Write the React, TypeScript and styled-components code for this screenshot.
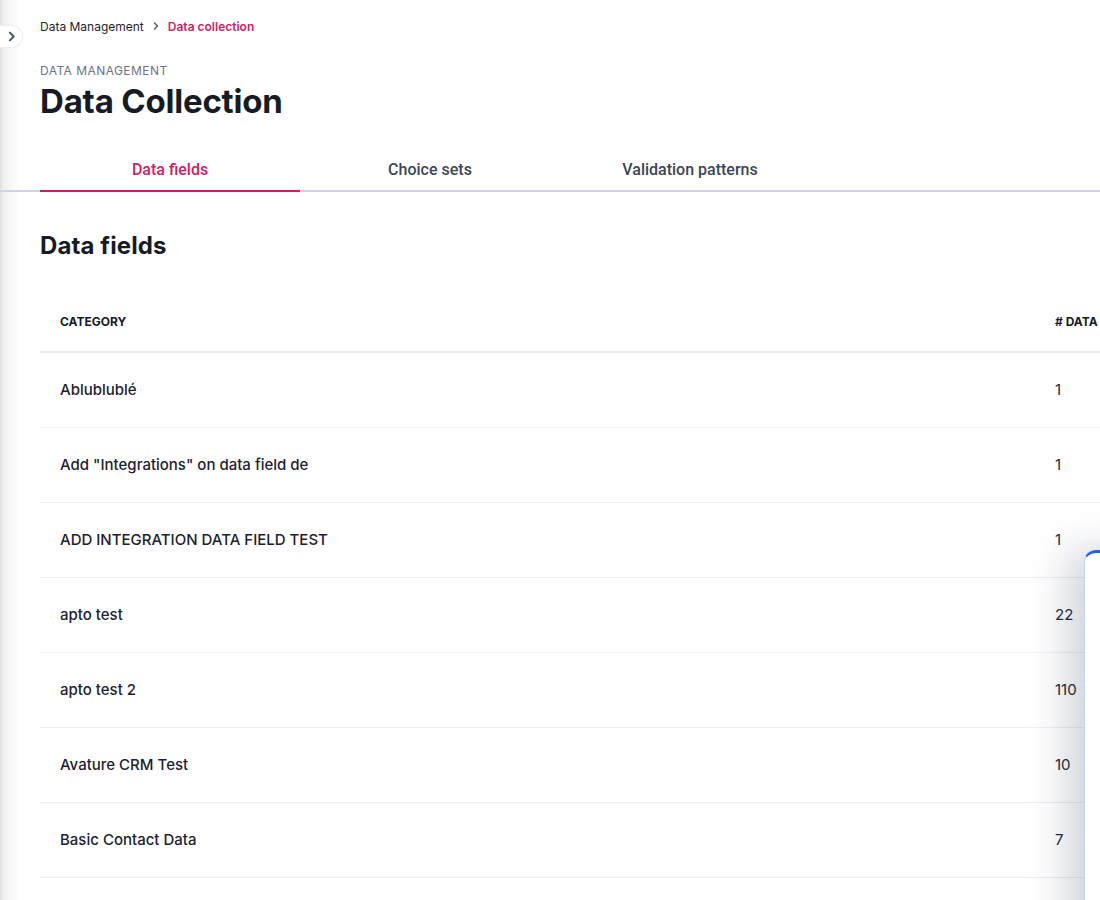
import React from "react";
import styled, { createGlobalStyle } from "styled-components";

const GlobalStyle = createGlobalStyle`
  html, body {
    margin: 0;
    padding: 0;
    background: #ffffff;
    font-family: Inter, "Noto Sans", sans-serif;
    color: #161b26;
  }
  * { box-sizing: border-box; }
`;

const Shell = styled.div`
  display: flex;
  height: 100vh;
  overflow: hidden;
  position: relative;
`;

// collapsed navigation: only the shaded edge is left
const SideRail = styled.aside`
  position: relative;
  flex: 0 0 20px;
  background: linear-gradient(
    to right,
    #dadada 0px,
    #ececec 2px,
    #f5f5f5 8px,
    #fbfbfb 14px,
    #ffffff 20px
  );
`;

const RailToggle = styled.button`
  position: absolute;
  top: 25px;
  left: 0;
  z-index: 3;
  width: 23px;
  height: 23px;
  padding: 0 0 0 1px;
  border: 1px solid #eceef3;
  border-left: none;
  border-radius: 0 12px 12px 0;
  background: #ffffff;
  display: flex;
  align-items: center;
  justify-content: center;
  color: #4b5565;
  cursor: pointer;
`;

const Main = styled.main`
  flex: 1;
  min-width: 0;
  padding: 17px 0 0 20px;
`;

const Crumbs = styled.nav`
  display: flex;
  align-items: center;
  gap: 8px;
  font-size: 12px;
  height: 18px;
`;

const Crumb = styled.span<{ $current?: boolean }>`
  color: ${(p) => (p.$current ? "#d81b60" : "#1f2430")};
  font-weight: ${(p) => (p.$current ? 600 : 400)};
`;

const Eyebrow = styled.div`
  margin-top: 28px;
  font-size: 12px;
  letter-spacing: 0.45px;
  text-transform: uppercase;
  color: #6b7385;
`;

const Title = styled.h1`
  margin: 3px 0 0;
  font-size: 33px;
  line-height: 40px;
  font-weight: 700;
  color: #161b26;
  letter-spacing: -0.2px;
`;

const TabBar = styled.div`
  position: relative;
  display: flex;
  margin-top: 31px;
  margin-left: -40px;
  padding-left: 40px;
  border-bottom: 2px solid #cdd3e0;
`;

const Tab = styled.button<{ $active?: boolean }>`
  width: 260px;
  height: 40px;
  margin-bottom: -2px;
  padding: 0 0 4px;
  background: none;
  border: none;
  border-bottom: 2px solid ${(p) => (p.$active ? "#d81b60" : "transparent")};
  font-family: Roboto, "Liberation Sans", sans-serif;
  font-weight: 500;
  font-size: 16px;
  color: ${(p) => (p.$active ? "#d81b60" : "#3d4555")};
  cursor: pointer;
`;

const SectionTitle = styled.h2`
  margin: 40px 0 0;
  font-size: 24px;
  line-height: 28px;
  font-weight: 700;
  color: #161b26;
  letter-spacing: 0.1px;
`;

const Table = styled.div`
  margin-top: 33px;
  width: 1200px;
`;

const HeadRow = styled.div`
  display: grid;
  grid-template-columns: 995px 1fr;
  height: 60px;
  align-items: center;
  padding: 0 0 2px 20px;
  border-bottom: 2px solid #e8ebf2;
  font-size: 12px;
  font-weight: 700;
  text-transform: uppercase;
  color: #161b26;
`;

const Row = styled.div`
  display: grid;
  grid-template-columns: 995px 1fr;
  height: 75px;
  align-items: center;
  padding: 0 0 2px 20px;
  border-bottom: 1px solid #eceef5;
  font-size: 15px;
  font-weight: 500;
  color: #1d2230;
`;

const Count = styled.span`
  font-weight: 400;
  color: #242a38;
`;

const Drawer = styled.div`
  position: fixed;
  left: 1084px;
  top: 550px;
  width: 380px;
  height: 420px;
  background: #ffffff;
  border-radius: 12px 0 0 0;
  border-top: 3px solid #2563eb;
  border-left: 1px solid #c5d5fa;
  box-shadow: -16px 0 40px rgba(20, 30, 60, 0.2);
`;

const categories: [string, number][] = [
  ["Ablublublé", 1],
  ['Add "Integrations" on data field de', 1],
  ["ADD INTEGRATION DATA FIELD TEST", 1],
  ["apto test", 22],
  ["apto test 2", 110],
  ["Avature CRM Test", 10],
  ["Basic Contact Data", 7],
];

export default function App() {
  return (
    <>
      <GlobalStyle />
      <Shell>
        <SideRail>
          <RailToggle aria-label="Expand sidebar">
            <svg width="11" height="11" viewBox="0 0 10 10" fill="none">
              <path d="M3.5 1.5L7 5L3.5 8.5" stroke="currentColor" strokeWidth="1.8" strokeLinecap="round" strokeLinejoin="round" />
            </svg>
          </RailToggle>
        </SideRail>
        <Main>
          <Crumbs>
            <Crumb>Data Management</Crumb>
            <svg width="8" height="8" viewBox="0 0 8 8" fill="none">
              <path d="M2.5 1L5.5 4L2.5 7" stroke="#5b6373" strokeWidth="1.6" strokeLinecap="round" strokeLinejoin="round" />
            </svg>
            <Crumb $current>Data collection</Crumb>
          </Crumbs>
          <Eyebrow>Data Management</Eyebrow>
          <Title>Data Collection</Title>
          <TabBar>
            <Tab $active>Data fields</Tab>
            <Tab>Choice sets</Tab>
            <Tab>Validation patterns</Tab>
          </TabBar>
          <SectionTitle>Data fields</SectionTitle>
          <Table>
            <HeadRow>
              <span>Category</span>
              <span># Data</span>
            </HeadRow>
            {categories.map(([name, count]) => (
              <Row key={name}>
                <span>{name}</span>
                <Count>{count}</Count>
              </Row>
            ))}
          </Table>
        </Main>
        <Drawer />
      </Shell>
    </>
  );
}
